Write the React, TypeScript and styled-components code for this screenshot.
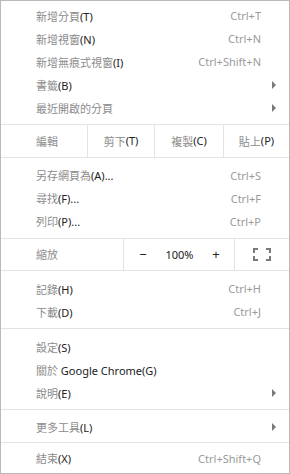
import React from "react";
import styled, { createGlobalStyle } from "styled-components";

const GlobalStyle = createGlobalStyle`
  html, body {
    margin: 0;
    padding: 0;
    background: #ffffff;
  }
  body {
    font-family: "Noto Sans", "Noto Sans CJK TC", sans-serif;
    font-size: 11px;
  }
`;

type Item = {
  label: string;
  shortcut?: string;
  submenu?: boolean;
};

const tabItems: Item[] = [
  { label: "新增分頁(T)", shortcut: "Ctrl+T" },
  { label: "新增視窗(N)", shortcut: "Ctrl+N" },
  { label: "新增無痕式視窗(I)", shortcut: "Ctrl+Shift+N" },
  { label: "書籤(B)", submenu: true },
  { label: "最近開啟的分頁", submenu: true },
];

const pageItems: Item[] = [
  { label: "另存網頁為(A)...", shortcut: "Ctrl+S" },
  { label: "尋找(F)...", shortcut: "Ctrl+F" },
  { label: "列印(P)...", shortcut: "Ctrl+P" },
];

const historyItems: Item[] = [
  { label: "記錄(H)", shortcut: "Ctrl+H" },
  { label: "下載(D)", shortcut: "Ctrl+J" },
];

const settingsItems: Item[] = [
  { label: "設定(S)" },
  { label: "關於 Google Chrome(G)" },
  { label: "說明(E)", submenu: true },
];

const cjkRun = /([\u3000-\u9fff\uf900-\ufaff]+)/;

// split CJK from latin so each run gets its own tone
const Label = ({ text }: { text: string }) => (
  <>
    {text.split(cjkRun).map((part, i) =>
      part === "" ? null : cjkRun.test(part) ? (
        <Cjk key={i}>{part}</Cjk>
      ) : (
        <Latin key={i}>{part}</Latin>
      )
    )}
  </>
);

const MenuRow = ({ item }: { item: Item }) => (
  <Row>
    <RowLabel>
      <Label text={item.label} />
    </RowLabel>
    {item.shortcut ? <Shortcut>{item.shortcut}</Shortcut> : null}
    {item.submenu ? <Arrow /> : null}
  </Row>
);

const FullscreenIcon = () => (
  <svg width="18" height="13" viewBox="0 0 18 13" fill="none">
    <path
      d="M1 5V1h4M13 1h4v4M17 8v4h-4M5 12H1V8"
      stroke="#7a7a7a"
      strokeWidth="2"
    />
  </svg>
);

export default function App() {
  return (
    <>
      <GlobalStyle />
      <Menu>
        <Group $pad="3px 0 5px">
          {tabItems.map((item) => (
            <MenuRow key={item.label} item={item} />
          ))}
        </Group>
        <EditRow>
          <EditCell $first>
            <Label text="編輯" />
          </EditCell>
          <EditCell>
            <Label text="剪下(T)" />
          </EditCell>
          <EditCell>
            <Label text="複製(C)" />
          </EditCell>
          <EditCell>
            <Label text="貼上(P)" />
          </EditCell>
        </EditRow>
        <Group $pad="6px 0 5px">
          {pageItems.map((item) => (
            <MenuRow key={item.label} item={item} />
          ))}
        </Group>
        <ZoomRow>
          <ZoomLabel>
            <Label text="縮放" />
          </ZoomLabel>
          <ZoomControls>
            <ZoomButton>−</ZoomButton>
            <ZoomValue>100%</ZoomValue>
            <ZoomButton>+</ZoomButton>
          </ZoomControls>
          <FullscreenCell>
            <FullscreenIcon />
          </FullscreenCell>
        </ZoomRow>
        <Group $pad="6px 0 5px">
          {historyItems.map((item) => (
            <MenuRow key={item.label} item={item} />
          ))}
        </Group>
        <Separator />
        <Group $pad="6px 0 5px">
          {settingsItems.map((item) => (
            <MenuRow key={item.label} item={item} />
          ))}
        </Group>
        <Separator />
        <Group $pad="5px 0 4px">
          <MenuRow item={{ label: "更多工具(L)", submenu: true }} />
        </Group>
        <Separator />
        <Group $pad="4px 0 3px">
          <MenuRow item={{ label: "結束(X)", shortcut: "Ctrl+Shift+Q" }} />
        </Group>
      </Menu>
    </>
  );
}

const Menu = styled.div`
  width: 290px;
  height: 474px;
  box-sizing: border-box;
  border: 1px solid #b9b9b9;
  background: #ffffff;
  display: flex;
  flex-direction: column;
  overflow: hidden;
`;

const Group = styled.div<{ $pad?: string }>`
  padding: ${(p) => p.$pad || "5px 0"};
`;

const Row = styled.div`
  height: 23px;
  display: flex;
  align-items: center;
  padding: 0 13px 0 35px;
`;

const RowLabel = styled.span`
  flex: 1;
  white-space: nowrap;
`;

const Cjk = styled.span`
  font-family: "Noto Sans CJK TC", sans-serif;
  font-size: 11px;
  color: #8c8c8c;
`;

const Latin = styled.span`
  color: #222222;
`;

const Shortcut = styled.span`
  color: #9a9a9a;
  margin-right: 15px;
  white-space: nowrap;
`;

const Arrow = styled.span`
  width: 0;
  height: 0;
  margin-left: auto;
  border-top: 4px solid transparent;
  border-bottom: 4px solid transparent;
  border-left: 4px solid #7a7a7a;
`;

const Separator = styled.div`
  height: 1px;
  background: #e3e3e3;
`;

const EditRow = styled.div`
  display: grid;
  grid-template-columns: 86px 67px 69px 1fr;
  height: 34px;
  box-sizing: border-box;
  border-top: 1px solid #e3e3e3;
  border-bottom: 1px solid #e3e3e3;
`;

const EditCell = styled.div<{ $first?: boolean }>`
  display: flex;
  align-items: center;
  justify-content: ${(p) => (p.$first ? "flex-start" : "center")};
  padding-left: ${(p) => (p.$first ? "35px" : "0")};
  border-left: ${(p) => (p.$first ? "none" : "1px solid #e3e3e3")};
  white-space: nowrap;
`;

const ZoomRow = styled.div`
  display: grid;
  grid-template-columns: 122px 111px 1fr;
  height: 34px;
  box-sizing: border-box;
  border-top: 1px solid #e3e3e3;
  border-bottom: 1px solid #e3e3e3;
`;

const ZoomLabel = styled.div`
  display: flex;
  align-items: center;
  padding-left: 35px;
`;

const ZoomControls = styled.div`
  display: flex;
  align-items: center;
  justify-content: space-between;
  padding: 0 14px 0 15px;
  border-left: 1px solid #e3e3e3;
  color: #222222;
`;

const ZoomButton = styled.span`
  font-size: 13px;
  width: 8px;
  text-align: center;
`;

const ZoomValue = styled.span`
  font-size: 11px;
`;

const FullscreenCell = styled.div`
  display: flex;
  align-items: center;
  justify-content: center;
  border-left: 1px solid #e3e3e3;
`;
